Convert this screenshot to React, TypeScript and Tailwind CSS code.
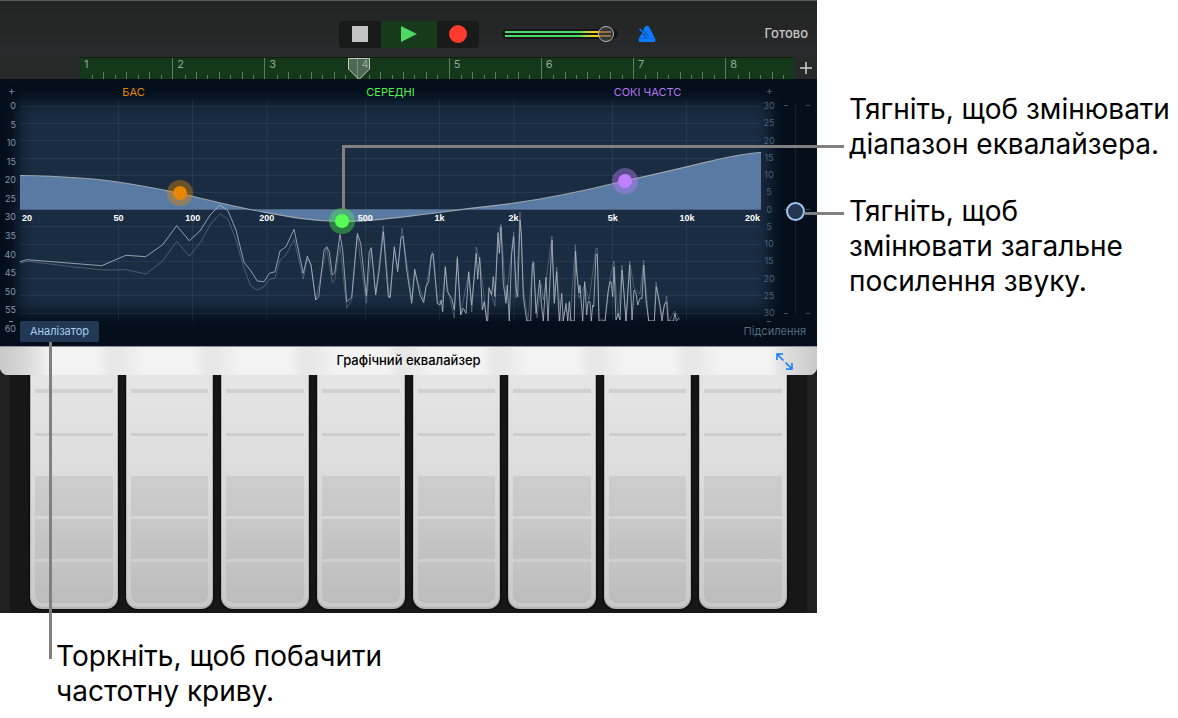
import { useState } from "react";

interface Band {
  name: string;
  left: string;
  top: string;
  halo: string;
  dot: string;
}

const leftScale = ["0", "5", "10", "15", "20", "25", "30", "35", "40", "45", "50", "55", "60"];
const rightScale = ["30", "25", "20", "15", "10", "5", "0", "5", "10", "15", "20", "25", "30"];
const bars = [1, 2, 3, 4, 5, 6, 7, 8];
const gridX = [118.5, 192.5, 267, 365.5, 439.5, 514, 612.5, 686.5];
const gridY = [106.5, 123.5, 140.5, 158.5, 175.5, 192.5, 226.5, 244.5, 261.5, 278.5, 295.5, 313.5];

const frequencies = [
  { label: "50", left: "13.3%" },
  { label: "100", left: "23.3%" },
  { label: "200", left: "33.3%" },
  { label: "500", left: "46.6%" },
  { label: "1k", left: "56.6%" },
  { label: "2k", left: "66.6%" },
  { label: "5k", left: "80%" },
  { label: "10k", left: "90%" },
];

const bands: Band[] = [
  { name: "Бас", left: "21.6%", top: "42.3%", halo: "bg-[#e88600]/40", dot: "bg-[#e88600]" },
  { name: "Середні", left: "43.4%", top: "54.8%", halo: "bg-[#4cf04c]/40", dot: "bg-[#55ff55]" },
  { name: "Високі частоти", left: "81.6%", top: "36.6%", halo: "bg-[#c080ff]/40", dot: "bg-[#c080ff]" },
];

const curve =
  "M20 175.5C50 176 85 177 118 182C150 187 165 190 180 193.5C205 199 225 204.5 250 209.5C280 215 305 221 341 221.5C380 221.5 405 216 440 212.5C470 208 495 206 514 203C550 198 590 189.5 624 181C655 174.5 690 166 715 160C735 155.5 750 153 761 152.5";

// analyzer trace, the spectrum before the equalizer is drawn dimmer
const trace =
  "20,261.7 27,259.7 101.7,265.7 126,255.3 145.7,256.7 162.7,244.7 176.7,225.7 189.3,240.7 200,231 210,215 220,205 228,210.7 236,230 244,262.3 250.7,270.7 257.3,281 264,281.7 269.3,273.3 275,271.7 280,251 286,246.7 294,229.3 303.3,273.3 307.3,256 311,265 315.7,300 318.7,296.7 324,250 326.7,246.7 329.3,251.7 332.3,275 334.7,272.7 340,234.3 342.7,250 346.7,301.7 351.7,297.3 357.3,233.3 360.7,243.3 366.3,295.7 369.3,251.7 371.3,247.7 375.7,295 379.3,270 383.3,231.7 388.3,296.7 390.3,297.3 394.3,246.7 397.7,271.7 401,238 403,236 406.7,270 411.7,303.3 414.7,269 420,295 423.7,302.7 426,286.7 428.7,281.7 431.3,255 433.3,254 437.3,303.3 440,305 441.3,300 442.7,311.7 445.3,266.7 447.3,291.7 451.7,298.3 454.3,310 457.3,258.3 460.7,315 463.3,308.3 466,313.3 468.7,271.7 471.7,305 476.3,253.3 477.7,279.3 479.7,257.3 482.3,310 484.3,301.7 486.7,321 487.7,321 489,288.3 491.7,295 493.3,276.7 495,296.7 498,232.7 499.3,253.3 501,226.7 503.3,283.3 506,303.3 507.3,285 509.3,321 511.7,253.3 513.7,236.7 516,288.3 517.7,296.7 520,220 521.3,233.3 523.3,296.7 526.7,321 530.7,321 532.3,265 533.7,262.7 536,313.3 539.7,280 541.3,303.3 543.3,321 546,277.3 548,321 552,240 554.3,303.3 556.7,271.7 559.3,321 561.7,293.3 563.3,321 566,303.3 567.7,321 569.3,301.7 571,321 574.3,321 575.5,251 576.7,273 579,293 580,285 582.7,321 584.7,281.7 586.7,315 588,301.7 590,301.7 591.3,321 592.7,305 593.7,306.7 596,254.3 597.3,254.3 599,321 605,321 608,292 610,281.7 611,281.7 612.7,296.7 614,266.7 616,320 618.3,313.3 620,320 622,270 624,293.3 626,321 629.7,265 632,320 634,290 636,293.3 637.7,305 640,298.3 642,298.3 643.7,265 646,300 648.7,321 654.3,321 656.3,286.7 657.7,293.3 660,306.7 662,321 664.3,305 666.7,301.7 668,321 673.3,321 675,313.3 676.3,321 679,318";
const traceDim =
  "20,263.3 28,261.3 76.7,267.3 103.3,270 126,269.7 145.7,274 162.7,261 176.7,241.3 189.3,256 201,241.7 210,225 220,213.7 228,219.3 236,240 244,268.3 250.7,285.7 257.3,290 264,286.7 269.3,279.3 275,278.3 280,260 286,255 294,239.3 303.3,279 307.3,259 311,265 315.7,300 326.7,248 332.3,282.7 334.7,280 340,245 346.7,308.3 351.7,300 357.3,236 366.3,303.3 371.3,250 375.7,293 383.3,225.7 389.3,298 394.3,249 397.7,268 402,228 412,300 414.7,272 423.7,300 432.3,251.7 438,303 442,302 445.3,268 448,290 454.3,318 457.3,256 460.7,314 468.7,273 471.7,312 476.3,247 480,262 486.7,319 489,287 495,306 498,235 501,224 506,300 507.3,290 511.7,250 513.7,232 516,298 520,212 523.3,288 528,321 533,261 537,318 541,284 543.3,300 546,280 552,236 554.3,300 556.7,267 561,321 566,308 570,321 575.3,244.7 579,298 584.7,285 589,300 596,248.3 597.3,248.3 599,318 605,321 610,279 614,261 618,318 622,265 626,321 629.7,261 634,288 640,294 643.7,260 648.7,321 654.3,321 656,282 662,315 666.7,296 669,321 674.7,311 680,320";

const EqualizerChart = ({ analyzer }: { analyzer: boolean }) => (
  <svg viewBox="20 100 741 221" preserveAspectRatio="none" className="absolute inset-0 size-full" aria-hidden="true">
    <g stroke="#8fb4d8" strokeOpacity="0.1">
      {gridX.map((x) => (
        <path key={x} d={`M${x} 100V321`} />
      ))}
      {gridY.map((y) => (
        <path key={y} d={`M20 ${y}H761`} />
      ))}
    </g>
    <path d={`${curve}V209.5H20Z`} fill="#597ba3" />
    <path d="M20 209.5H761" stroke="#4a6482" />
    <path d={curve} fill="none" stroke="#9ba5ae" strokeWidth="1.2" />
    {analyzer && (
      <g fill="none">
        <polyline points={traceDim} stroke="#a5b4c2" strokeOpacity="0.35" />
        <polyline points={trace} stroke="#b3bcc5" strokeOpacity="0.8" />
      </g>
    )}
  </svg>
);

const Transport = () => (
  <div className="flex h-[27px] overflow-hidden rounded bg-[#191a1a]">
    <button aria-label="Стоп" className="flex w-[42px] items-center justify-center">
      <span className="size-4 bg-[#c3c3c3]" />
    </button>
    <button aria-label="Відтворити" className="flex w-14 items-center justify-center bg-[#173a1c]">
      <svg width="16" height="16" viewBox="0 0 16 16">
        <path d="M0 0 16 8 0 16Z" fill="#4cd964" />
      </svg>
    </button>
    <button aria-label="Запис" className="flex w-[42px] items-center justify-center">
      <span className="size-[18px] rounded-full bg-[#ff3b30]" />
    </button>
  </div>
);

const Metronome = () => (
  <svg width="18" height="18" viewBox="0 0 18 18">
    <path d="M6.8 2Q9 -0.6 11.2 2L17.3 14Q17.8 17 16 17H2Q0.2 17 0.7 14Z" fill="#0a7aff" />
    <path d="M2 13.5H16" stroke="#0567dd" />
    <path d="M0.8 4.8 8.4 12.6M2.6 3 10.2 10.8" stroke="#252728" strokeWidth="0.9" />
    <path d="M1.5 3.8 9.2 11.6" stroke="#0a7aff" strokeWidth="1.4" />
  </svg>
);

const Toolbar = ({ volume, setVolume }: { volume: number; setVolume: (v: number) => void }) => (
  <div className="grid h-[57px] grid-cols-[1fr_auto_1fr] items-center border-t border-[#585a5a] bg-linear-to-b from-[#222423] to-[#292b2c] pt-[10px]">
    <div />
    <Transport />
    <div className="flex items-center">
      <div className="relative ml-[23px] h-[10px] w-[116px] rounded-full bg-[#151616]">
        <div className="absolute top-[2px] left-[3px] h-[2px] w-[106px] bg-linear-to-r from-[#4cd964] from-70% via-[#ffcc00] via-85% to-[#ffab40]" />
        <div className="absolute top-[6px] left-[3px] h-[2px] w-[106px] bg-linear-to-r from-[#4cd964] from-70% via-[#ffcc00] via-85% to-[#ffab40]" />
        <input
          type="range"
          aria-label="Гучність"
          value={volume}
          onChange={(e) => setVolume(Number(e.target.value))}
          className="absolute -top-[3px] left-0 h-4 w-full appearance-none bg-transparent [&::-webkit-slider-thumb]:size-4 [&::-webkit-slider-thumb]:appearance-none [&::-webkit-slider-thumb]:rounded-full [&::-webkit-slider-thumb]:border [&::-webkit-slider-thumb]:border-[#b5b5b5] [&::-webkit-slider-thumb]:bg-[#4a4a4a]/60"
        />
      </div>
      <button aria-label="Метроном" className="ml-5">
        <Metronome />
      </button>
      <button className="mr-[9px] ml-auto text-[13px] font-medium text-[#c6c6c6]">Готово</button>
    </div>
  </div>
);

const Ruler = () => (
  <div className="flex h-[22px] bg-[#272929]">
    <div className="relative ml-20 flex-1 border-t border-[#101c12] bg-[#14391a]">
      <div className="flex h-full overflow-hidden">
        {bars.map((bar) => (
          <div key={bar} className={`relative h-full shrink-0 basis-[12.91%] ${bar > 1 ? "border-l border-[#5d7c61]" : ""}`}>
            <span className="block pl-1 text-[11px] leading-3 text-[#93a895]">{bar}</span>
            <div className="absolute inset-x-0 bottom-0 flex items-end">
              {[0, 1, 2, 3, 4, 5, 6, 7].map((tick) => (
                <span
                  key={tick}
                  className={`flex-1 border-l ${tick === 0 ? "border-transparent" : "border-[#5d7c61]"} ${tick % 2 ? "h-1" : "h-[7px]"}`}
                />
              ))}
            </div>
          </div>
        ))}
      </div>
      <svg width="22" height="22" viewBox="0 0 22 22" className="absolute top-0 left-[37.5%]">
        <path d="M0.5 0.5H21.5V11L11 21.5L0.5 11Z" fill="#a5b5a8" fillOpacity="0.4" stroke="#c2c8c3" />
      </svg>
    </div>
    <button aria-label="Додати" className="flex w-[23px] items-center justify-center">
      <svg width="12" height="12" viewBox="0 0 12 12">
        <path d="M6 0V12M0 6H12" stroke="#d0d0d0" strokeWidth="1.5" />
      </svg>
    </button>
  </div>
);

const Equalizer = ({ gain, setGain }: { gain: number; setGain: (v: number) => void }) => {
  const [analyzer, setAnalyzer] = useState(true);

  return (
    <div className="relative h-[267px] bg-[#040f1b]">
      <div className="absolute top-[37px] right-[61px] bottom-[48px] left-[32px] bg-[#1a2c42] shadow-[0_0_14px_14px_#1a2c42]" />

      {/* Band names */}
      <div className="relative grid h-[21px] grid-cols-3 items-center pt-1 pr-[41px] pl-[5px] text-center text-[11px] leading-4">
        <span className="text-[#e88600]">БАС</span>
        <span className="text-[#55f055]">СЕРЕДНІ</span>
        <span className="text-[#b478f0]">СОКІ ЧАСТС</span>
        <span className="absolute top-1 left-2 text-[#7388a0]">+</span>
        <span className="absolute top-1 right-[44px] text-[#4d6178]">+</span>
      </div>

      <div className="relative flex h-[221px]">
        <div className="relative -mt-px flex h-[237px] w-5 flex-col justify-between pr-1 text-right text-[9px] leading-[14px] text-[#8296ad]">
          {leftScale.map((value) => (
            <span key={value}>{value}</span>
          ))}
          <span className="absolute right-[7px] bottom-[14px] h-px w-1 bg-[#8296ad]" />
        </div>

        <div className="relative flex-1">
          <EqualizerChart analyzer={analyzer} />
          <div className="absolute inset-x-0 top-[112px] h-3 font-['Liberation_Sans',sans-serif] text-[9px] leading-3 font-bold text-white">
            <span className="absolute left-[2px]">20</span>
            {frequencies.map((f) => (
              <span key={f.label} className="absolute -translate-x-1/2" style={{ left: f.left }}>
                {f.label}
              </span>
            ))}
            <span className="absolute right-px">20k</span>
          </div>
          {bands.map((band) => (
            <button
              key={band.name}
              aria-label={band.name}
              style={{ left: band.left, top: band.top }}
              className={`absolute flex size-[26px] -translate-1/2 items-center justify-center rounded-full ${band.halo}`}
            >
              <span className={`size-[14px] rounded-full ${band.dot}`} />
            </button>
          ))}
        </div>

        <div className="relative -mt-px flex h-[221px] w-4 flex-col justify-between text-center text-[9px] leading-[14px] text-[#4d6178]">
          {rightScale.map((value, i) => (
            <span key={i}>{value}</span>
          ))}
          <span className="absolute -bottom-[2px] left-[6px] h-px w-1 bg-[#4d6178]" />
        </div>

        {/* Output gain */}
        <div className="relative w-10">
          <div className="absolute top-[5px] left-[18px] h-[209px] w-px bg-[#14212f]" />
          <div className="absolute inset-x-[7px] top-[5px] flex h-[209px] flex-col justify-between">
            {[0, 1, 2].map((i) => (
              <div key={i} className="flex justify-between">
                <span className="h-px w-1 bg-[#3c4f66]" />
                <span className="h-px w-1 bg-[#3c4f66]" />
              </div>
            ))}
          </div>
          <input
            type="range"
            aria-label="Підсилення"
            value={gain}
            onChange={(e) => setGain(Number(e.target.value))}
            className="absolute top-[5px] left-[9px] h-[209px] w-[19px] appearance-none bg-transparent [direction:rtl] [writing-mode:vertical-lr] [&::-webkit-slider-thumb]:size-[19px] [&::-webkit-slider-thumb]:appearance-none [&::-webkit-slider-thumb]:rounded-full [&::-webkit-slider-thumb]:border-2 [&::-webkit-slider-thumb]:border-[#9fc6f5] [&::-webkit-slider-thumb]:bg-[#22374f]"
          />
        </div>
      </div>

      <div className="relative flex items-center justify-between pr-[11px] pl-5 text-[11px]">
        <button
          onClick={() => setAnalyzer(!analyzer)}
          className="h-[21px] w-[79px] rounded-xs bg-[#213954] text-[#a9cdf2]"
        >
          Аналізатор
        </button>
        <span className="text-[#56697f]">Підсилення</span>
      </div>
    </div>
  );
};

const TitleBar = () => (
  <div className="relative z-10 flex h-[29px] items-center justify-center rounded-b-lg border-t border-[#8b8d90] bg-[linear-gradient(90deg,#c8c8c8_0,#c8c8c800_50px,#c8c8c800_calc(100%-45px),#c8c8c8_100%),repeating-linear-gradient(90deg,#f3f3f3_0,#e8e8e8_14px,#e8e8e8_24px,#f3f3f3_50px,#f3f3f3_96px)]">
    <h1 className="text-[13px] font-medium text-black">Графічний еквалайзер</h1>
    <button aria-label="Розгорнути" className="absolute right-6">
      <svg width="17" height="17" viewBox="0 0 17 17" fill="none" stroke="#0a7aff" strokeWidth="1.5">
        <path d="M1 7V1H7M1 1 7.5 7.5M16 10V16H10M16 16 9.5 9.5" />
      </svg>
    </button>
  </div>
);

const StringPad = () => (
  <button
    aria-label="Акорд"
    className="flex flex-col rounded-b-xl border-x border-b-2 border-[#b4b4b4] bg-linear-to-b from-[#e5e5e5] via-[#dcdcdc] via-45% to-[#c9c9c9] px-1 pb-1 shadow-[0_0_3px_#000]"
  >
    <span className="mt-[14px] h-1 w-full bg-[#d0d0d0]" />
    <span className="mt-[40px] h-[3px] w-full bg-[#cdcdcd]" />
    <span className="mt-[40px] h-10 w-full bg-linear-to-b from-[#cdcdcd] to-[#c8c8c8]" />
    <span className="mt-[3px] h-10 w-full bg-linear-to-b from-[#c8c8c8] to-[#c1c1c1]" />
    <span className="mt-[3px] h-[41px] w-full rounded-b-lg bg-linear-to-b from-[#c4c4c4] to-[#bcbcbc]" />
  </button>
);

const App = () => {
  const [volume, setVolume] = useState(96);
  const [gain, setGain] = useState(49);

  return (
    <main className="relative grid min-h-screen grid-cols-[minmax(0,817fr)_minmax(0,361fr)] items-start bg-white font-['Inter','Liberation_Sans',sans-serif] text-black">
      <div>
        <section className="bg-[#171717]">
          <Toolbar volume={volume} setVolume={setVolume} />
          <Ruler />
          <Equalizer gain={gain} setGain={setGain} />
          <div className="border-x-[10px] border-[#212121]">
            <div className="-mx-[10px]">
              <TitleBar />
            </div>
            <div className="grid grid-cols-8 gap-2 px-5 pb-1">
              {bars.map((n) => (
                <StringPad key={n} />
              ))}
            </div>
          </div>
        </section>
        <p className="pt-[26px] pl-14 text-[28px] leading-[35px]">
          Торкніть, щоб побачити
          <br />
          частотну криву.
        </p>
      </div>

      <aside className="flex flex-col gap-8 pt-[92px] pl-8 text-[28px] leading-[35px] whitespace-nowrap">
        <p>
          Тягніть, щоб змінювати
          <br />
          діапазон еквалайзера.
        </p>
        <p>
          Тягніть, щоб
          <br />
          змінювати загальне
          <br />
          посилення звуку.
        </p>
      </aside>

      {/* Leader lines from the notes to the controls */}
      <div className="absolute top-[145px] left-[342px] z-20 h-[64px] w-[502px] border-t-3 border-l-3 border-[#808080]" />
      <div className="absolute top-[212px] left-[805px] z-20 h-[3px] w-[39px] bg-[#808080]" />
      <div className="absolute top-[342px] left-[49px] z-20 h-[317px] w-[3px] bg-[#808080]" />
    </main>
  );
};

export default App;
